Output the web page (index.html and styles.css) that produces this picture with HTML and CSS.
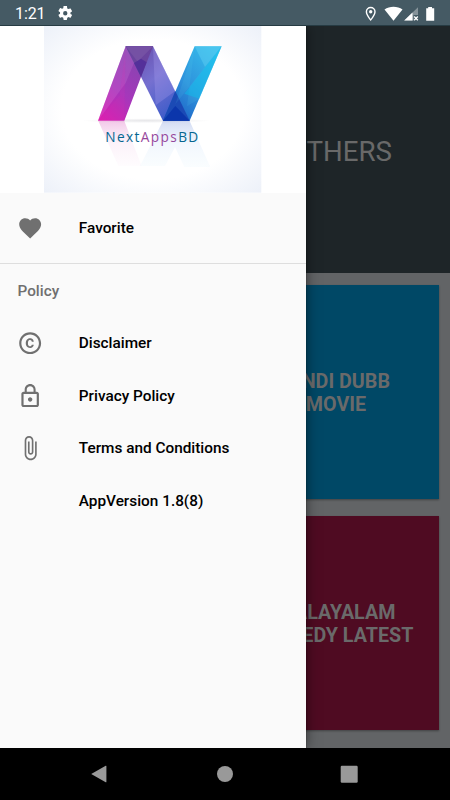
FILE: index.html
```html
<!DOCTYPE html>
<html lang="en">
<head>
<meta charset="utf-8">
<title>NextAppsBD</title>
<link rel="stylesheet" href="styles.css">
</head>
<body>
<div class="phone">
  <header class="status">
    <span class="clock">1:21</span>
    <svg class="gear" viewBox="2 2 20 20"><path d="M19.14 12.94c.04-.3.06-.61.06-.94s-.02-.64-.07-.94l2.03-1.58c.18-.14.23-.41.12-.61l-1.92-3.32c-.12-.22-.37-.29-.59-.22l-2.39.96c-.5-.38-1.03-.7-1.62-.94l-.36-2.54A.48.48 0 0 0 13.92 2h-3.84c-.24 0-.43.17-.47.41l-.36 2.54c-.59.24-1.13.57-1.62.94l-2.39-.96c-.22-.08-.47 0-.59.22L2.74 8.47c-.12.21-.08.47.12.61l2.03 1.58c-.05.3-.09.63-.09.94s.02.64.07.94l-2.03 1.58c-.18.14-.23.41-.12.61l1.92 3.32c.12.22.37.29.59.22l2.39-.96c.5.38 1.03.7 1.62.94l.36 2.54c.05.24.24.41.48.41h3.84c.24 0 .44-.17.47-.41l.36-2.54c.59-.24 1.13-.56 1.62-.94l2.39.96c.22.08.47 0 .59-.22l1.92-3.32c.12-.22.07-.47-.12-.61zM12 15a3 3 0 1 1 0-6 3 3 0 0 1 0 6z"/></svg>
    <svg class="signals" viewBox="0 0 72 16">
      <path fill-rule="evenodd" d="M5.7.8A5 5 0 0 0 .7 5.8c0 3.7 5 9.2 5 9.2s5-5.5 5-9.2a5 5 0 0 0-5-5zm0 1.4a3.6 3.6 0 0 1 3.6 3.6c0 2-2 5-3.6 7.1C4.1 10.8 2.1 7.8 2.1 5.8A3.6 3.6 0 0 1 5.7 2.2z"/>
      <circle cx="5.7" cy="5.8" r="1.7"/>
      <path d="M19.5 3.6C24.5-.1 32.5-.1 37.5 3.6L28.5 14.8z"/>
      <path class="faint" d="M53 1.2V9h-4.500v5.500H39.200z"/>
      <path d="M47.500 6.500V14.500H39.200z"/>
      <path class="cross" d="M49.200 10.500l3.600 3.800m0-3.800l-3.600 3.800"/>
      <path d="M61.200 2.200h2V.9h3.800v1.300h2.200v12.500h-8z"/>
    </svg>
  </header>
  <main class="content">
    <section class="hero"><span>OTHERS</span></section>
    <section class="grid">
      <div class="card blue"></div>
      <div class="card blue"><span>HINDI DUBB<br>MOVIE</span></div>
      <div class="card wine"></div>
      <div class="card wine"><span>MALAYALAM<br>COMEDY LATEST</span></div>
    </section>
    <aside class="drawer">
      <div class="banner">
        <svg class="logo" viewBox="13 0 652 500">
          <defs>
            <radialGradient id="bg" cx=".5" cy=".5" r=".7"><stop offset=".6" stop-color="#fff"/><stop offset="1" stop-color="#edf1f9"/></radialGradient>
            <linearGradient id="left" x1="0" y1="1" x2=".7" y2="0"><stop offset="0" stop-color="#df1baf"/><stop offset=".45" stop-color="#a737bb"/><stop offset="1" stop-color="#8048ae"/></linearGradient>
            <linearGradient id="mid" x1="0" y1="0" x2=".7" y2="1"><stop offset="0" stop-color="#6447a5"/><stop offset=".5" stop-color="#7670d0"/><stop offset="1" stop-color="#3659c8"/></linearGradient>
            <linearGradient id="right" x1="0" y1="1" x2=".8" y2="0"><stop offset="0" stop-color="#1750bd"/><stop offset=".5" stop-color="#2e92dc"/><stop offset="1" stop-color="#36bdec"/></linearGradient>
            <linearGradient id="fade1" x1="0" y1="0" x2="0" y2="1"><stop offset="0" stop-color="#d33caf" stop-opacity=".28"/><stop offset=".5" stop-color="#e9a0d7" stop-opacity=".13"/><stop offset="1" stop-color="#e9a0d7" stop-opacity=".03"/></linearGradient>
            <linearGradient id="fade2" x1="0" y1="0" x2="0" y2="1"><stop offset="0" stop-color="#4568cb" stop-opacity=".24"/><stop offset=".5" stop-color="#82b0f0" stop-opacity=".1"/><stop offset="1" stop-color="#82cdf0" stop-opacity=".04"/></linearGradient>
            <radialGradient id="ground"><stop offset="0" stop-color="#667" stop-opacity=".16"/><stop offset="1" stop-color="#667" stop-opacity="0"/></radialGradient>
            <linearGradient id="name" gradientUnits="userSpaceOnUse" x1="200" y1="0" x2="500" y2="0"><stop offset=".34" stop-color="#08658f"/><stop offset=".34" stop-color="#94469b"/><stop offset=".723" stop-color="#94469b"/><stop offset=".723" stop-color="#08658f"/></linearGradient>
          </defs>
          <rect x="13" width="652" height="500" fill="url(#bg)"/>
          <ellipse cx="320" cy="284" rx="195" ry="7" fill="url(#ground)"/>
          <path d="M176 285h78l52 135h-70z" fill="url(#fade1)"/>
          <path d="M370 285h80l62 138h-78zM370 285h78l-72 135h-75z" fill="url(#fade2)"/>
          <path d="M258 61h82L304 153 254 284h-79z" fill="url(#left)"/>
          <path d="M258 61h82L450 284h-80z" fill="url(#mid)"/>
          <path d="M465 61h81L450 284h-80z" fill="url(#right)"/>
          <path d="M258 61h82L304 153z" fill="#6a449e"/>
          <path d="M258 61h82l-46 46z" fill="#7551a4"/>
          <path d="M283 111l21-13 17 11-17 44z" fill="#54309a"/>
          <path d="M407 195l43 89h-80z" fill="#1b4ab5"/>
          <path d="M407 240l43 44h-80z" fill="#0b36ab"/>
          <path d="M258 61l25 50-25 60-83 113z" fill="#dc8de0" opacity=".2"/>
          <path d="M258 61l-4 223h-79l65-75z" fill="#dc30b5" opacity=".16"/>
          <path d="M340 61l8 177 59-43z" fill="#aaa0ed" opacity=".3"/>
          <path d="M465 61l-23 180 37-23L546 61l-139 174z" fill="#57d2f2" opacity=".12"/>
          <path d="M465 61l31 62 50-62z" fill="#5ccdf2" opacity=".5"/>
          <path d="M546 61L434 203l45 15z" fill="#0cc0ee" opacity=".45"/>
          <text class="brand" x="197" y="347" textLength="283" lengthAdjust="spacingAndGlyphs" fill="url(#name)">NextAppsBD</text>
        </svg>
      </div>
      <nav class="menu first">
        <a class="item"><svg viewBox="0 0 24 24"><path d="M12 21.350l-1.450-1.320C5.400 15.360 2 12.280 2 8.500 2 5.420 4.420 3 7.500 3c1.740 0 3.410.81 4.500 2.090C13.090 3.810 14.760 3 16.500 3 19.580 3 22 5.420 22 8.500c0 3.780-3.400 6.860-8.550 11.540z"/></svg><span>Favorite</span></a>
      </nav>
      <nav class="menu second">
        <h2>Policy</h2>
        <a class="item"><svg viewBox="0 0 24 24"><path d="M10.080 10.860c.05-.33.16-.62.3-.87s.34-.46.590-.62c.240-.150.540-.220.910-.230.230.010.440.050.630.130.200.090.380.210.520.360s.250.330.340.530.130.420.140.640h1.790c-.020-.470-.110-.900-.280-1.290s-.400-.730-.700-1.010-.660-.500-1.080-.660-.880-.230-1.390-.230c-.650 0-1.220.110-1.700.340s-.880.530-1.200.920-.560.840-.710 1.360S8 11.290 8 11.870v.270c0 .580.080 1.120.230 1.640s.390.970.710 1.350.72.690 1.200.91 1.050.34 1.700.34c.47 0 .91-.08 1.320-.23s.77-.36 1.080-.63.560-.58.740-.940.290-.740.300-1.150h-1.790c-.010.210-.060.400-.150.580s-.210.330-.360.460-.320.230-.520.300c-.190.070-.390.090-.600.100-.360-.010-.660-.080-.890-.230-.250-.160-.450-.370-.590-.620s-.250-.550-.300-.880-.080-.670-.080-1v-.270c0-.350.030-.680.080-1.010zM12 2C6.480 2 2 6.480 2 12s4.480 10 10 10 10-4.480 10-10S17.520 2 12 2zm0 18c-4.410 0-8-3.590-8-8s3.590-8 8-8 8 3.590 8 8-3.590 8-8 8z"/></svg><span>Disclaimer</span></a>
        <a class="item"><svg viewBox="0 0 24 24"><path d="M12 17c1.100 0 2-.9 2-2s-.9-2-2-2-2 .9-2 2 .9 2 2 2zm6-9h-1V6c0-2.760-2.240-5-5-5S7 3.240 7 6v2H6c-1.100 0-2 .9-2 2v10c0 1.100.9 2 2 2h12c1.100 0 2-.9 2-2V10c0-1.100-.9-2-2-2zM8.900 6c0-1.710 1.390-3.100 3.100-3.100s3.100 1.390 3.100 3.100v2H8.900V6zM18 20H6V10h12v10z"/></svg><span>Privacy Policy</span></a>
        <a class="item"><svg viewBox="0 0 24 24"><path d="M16.500 6v11.500c0 2.210-1.790 4-4 4s-4-1.790-4-4V5c0-1.380 1.120-2.500 2.500-2.500s2.500 1.120 2.500 2.500v10.500c0 .55-.45 1-1 1s-1-.45-1-1V6H10v9.500c0 1.380 1.120 2.500 2.500 2.500s2.500-1.120 2.500-2.500V5c0-2.210-1.790-4-4-4S7 2.790 7 5v12.500c0 3.040 2.460 5.500 5.500 5.500s5.500-2.460 5.500-5.500V6h-1.500z"/></svg><span>Terms and Conditions</span></a>
        <a class="item"><i class="blank"></i><span>AppVersion 1.8(8)</span></a>
      </nav>
    </aside>
  </main>
  <footer class="navbar">
    <svg viewBox="0 0 18 18"><path d="M.2 9L14.700.8Q15.400.4 15.400 1.200V16.800Q15.400 17.600 14.700 17.200z"/></svg>
    <svg viewBox="0 0 18 18"><circle cx="9" cy="9" r="8"/></svg>
    <svg viewBox="0 0 18 18"><rect x=".7" y=".7" width="17" height="17" rx="1.200"/></svg>
  </footer>
</div>
</body>
</html>
```

FILE: styles.css
```css
* { box-sizing: border-box; }
body { margin: 0; font-family: Roboto, "Liberation Sans", sans-serif; }
.phone { width: 450px; height: 800px; display: flex; flex-direction: column; overflow: hidden; background: #000; }

.status { height: 26px; flex: none; display: flex; align-items: center; padding: 2px 13px 0 15px; background: #455a64; border-bottom: 1px solid #263b43; color: #fff; }
.clock { font-size: 16px; line-height: 24px; width: 43px; letter-spacing: -0.1px; }
.status svg { fill: #fff; }
.gear { width: 14.5px; height: 14.5px; }
.signals { width: 72px; height: 16px; margin-left: auto; }
.signals .faint { opacity: .35; }
.signals .cross { stroke: #fff; stroke-width: 1.3; fill: none; }

.content { position: relative; height: 722px; flex: none; background: #626466; overflow: hidden; }
.hero { height: 247px; display: flex; align-items: center; justify-content: flex-end; padding: 3px 58px 0 0; background: #1e2528; color: #696969; font-size: 27.7px; }
.grid { display: grid; grid-template-columns: 205px 205px; grid-auto-rows: 214px; gap: 17px; padding: 12px 11px; justify-content: end; }
.card { display: flex; align-items: center; justify-content: center; text-align: center; color: #6a6a6a; font-size: 19.7px; line-height: 23px; font-weight: 700; box-shadow: 0 1px 2px rgba(0, 0, 0, .35); white-space: nowrap; padding: 2px 1px 0 0; }
.blue { background: #004866; }
.wine { background: #4f0b22; }

.drawer { position: absolute; left: 0; top: 0; bottom: 0; width: 306px; background: #fafafa; box-shadow: 0 0 12px rgba(0, 0, 0, .5), 0 0 1px rgba(0, 0, 0, .6); }
.banner { height: 167px; display: flex; justify-content: center; background: #fff; }
.logo { width: 217.3px; height: 166.7px; }
.brand { font-family: "Open Sans", "Noto Sans", sans-serif; font-size: 45px; letter-spacing: 4.5px; }
.menu { display: flex; flex-direction: column; }
.first { padding: 8.7px 0; border-bottom: 1px solid #dedede; }
.second { padding-top: .6px; }
.menu h2 { margin: 0; height: 52.5px; line-height: 54px; padding-left: 17.5px; font-size: 15.3px; font-weight: 500; color: #6f6f6f; }
.item { height: 52.5px; display: flex; align-items: center; padding-left: 17.4px; color: #000; font-size: 15.35px; font-weight: 500; }
.item svg, .blank { width: 26.3px; height: 26.3px; margin-right: 35.1px; fill: #707070; flex: none; }

.navbar { height: 52px; flex: none; display: flex; align-items: center; justify-content: space-between; padding: 0 92px 0 91px; background: #000; }
.navbar svg { width: 18px; height: 18px; fill: #999; }
```
